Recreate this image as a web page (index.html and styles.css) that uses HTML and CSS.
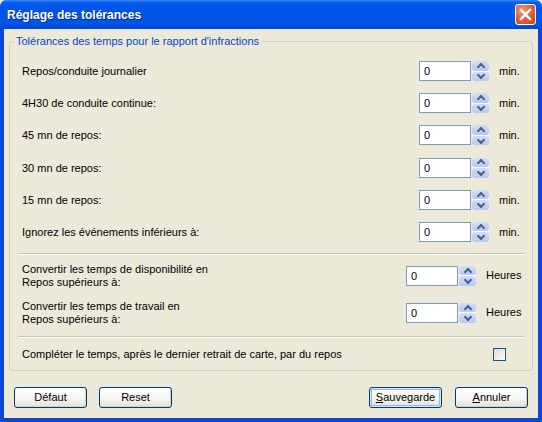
FILE: index.html
```html
<!DOCTYPE html>
<html lang="fr">
<head>
	<meta charset="UTF-8">
	<title>Réglage des tolérances</title>
	<link rel="stylesheet" href="styles.css">
</head>
<body>
	<div class="window">
		<div class="titlebar">
			<span class="title">Réglage des tolérances</span>
			<div class="close">
				<svg width="13" height="13" viewBox="0 0 13 13"><path d="M2 2 L11 11 M11 2 L2 11" stroke="#fff" stroke-width="2.4" stroke-linecap="square"/></svg>
			</div>
		</div>
		<div class="client">
			<fieldset class="group">
				<legend>Tolérances des temps pour le rapport d'infractions</legend>
				<div class="rows">
					<div class="row">
						<span class="label">Repos/conduite journalier</span>
						<div class="edit">0</div>
						<div class="spin"><div class="up"></div><div class="down"></div></div>
						<span class="unit">min.</span>
					</div>
					<div class="row">
						<span class="label">4H30 de conduite continue:</span>
						<div class="edit">0</div>
						<div class="spin"><div class="up"></div><div class="down"></div></div>
						<span class="unit">min.</span>
					</div>
					<div class="row">
						<span class="label">45 mn de repos:</span>
						<div class="edit">0</div>
						<div class="spin"><div class="up"></div><div class="down"></div></div>
						<span class="unit">min.</span>
					</div>
					<div class="row">
						<span class="label">30 mn de repos:</span>
						<div class="edit">0</div>
						<div class="spin"><div class="up"></div><div class="down"></div></div>
						<span class="unit">min.</span>
					</div>
					<div class="row">
						<span class="label">15 mn de repos:</span>
						<div class="edit">0</div>
						<div class="spin"><div class="up"></div><div class="down"></div></div>
						<span class="unit">min.</span>
					</div>
					<div class="row">
						<span class="label">Ignorez les événements inférieurs à:</span>
						<div class="edit">0</div>
						<div class="spin"><div class="up"></div><div class="down"></div></div>
						<span class="unit">min.</span>
					</div>
				</div>
				<div class="sep"></div>
				<div class="rows rows-h">
					<div class="row row-h">
						<span class="label">Convertir les temps de disponibilité en<br>Repos supérieurs à:</span>
						<div class="edit">0</div>
						<div class="spin"><div class="up"></div><div class="down"></div></div>
						<span class="unit">Heures</span>
					</div>
					<div class="row row-h">
						<span class="label">Convertir les temps de travail en<br>Repos supérieurs à:</span>
						<div class="edit">0</div>
						<div class="spin"><div class="up"></div><div class="down"></div></div>
						<span class="unit">Heures</span>
					</div>
				</div>
				<div class="sep sep2"></div>
				<div class="check-row">
					<span class="label">Compléter le temps, après le dernier retrait de carte, par du repos</span>
					<div class="checkbox"></div>
				</div>
			</fieldset>
			<div class="buttons">
				<div class="btn">Défaut</div>
				<div class="btn btn-reset">Reset</div>
				<div class="spacer"></div>
				<div class="btn btn-default"><u>S</u>auvegarde</div>
				<div class="btn btn-cancel"><u>A</u>nnuler</div>
			</div>
		</div>
	</div>
</body>
</html>
```

FILE: styles.css
```css
* {
	margin: 0;
	padding: 0;
	box-sizing: border-box;
}
body {
	font-family: "Liberation Sans", Arial, sans-serif;
	font-size: 11px;
	color: #000;
	background: #ECE9D8;
}
.window {
	width: 542px;
	height: 422px;
	display: flex;
	flex-direction: column;
	background: #0A47D8;
	border-radius: 7px 7px 0 0;
	overflow: hidden;
}
.titlebar {
	height: 29px;
	display: flex;
	align-items: center;
	padding: 0 6px 0 7px;
	background: linear-gradient(#3D8EF8 0, #0B61EF 2px, #0058EC 6px, #0054E6 14px, #0055E8 22px, #004FDB 26px, #0047CC 29px);
}
.title {
	flex: 1;
	font-size: 12px;
	font-weight: bold;
	color: #fff;
	text-shadow: 1px 1px 0 #0B2A8C;
	padding-top: 1px;
}
.close {
	width: 21px;
	height: 21px;
	border: 1px solid #fff;
	border-radius: 3px;
	background: radial-gradient(circle at 35% 30%, #EE9C82 0, #E2643F 45%, #C8401D 100%);
	display: flex;
	align-items: center;
	justify-content: center;
}
.client {
	flex: 1;
	margin: 0 4px 4px 4px;
	background: #ECE9D8;
	display: flex;
	flex-direction: column;
	padding: 0 5px;
}
.group {
	margin-top: 5px;
	border: 1px solid #D0D0BF;
	border-radius: 4px;
	padding: 13px 8px 9px 8px;
}
.group legend {
	color: #0046D5;
	height: 14px;
	line-height: 14px;
	padding: 0 3px 0 2px;
	margin-left: -4px;
}
.rows {
	display: flex;
	flex-direction: column;
	gap: 12.2px;
}
.row {
	height: 20px;
	display: grid;
	grid-template-columns: 1fr 52px 17px 34px;
	column-gap: 1px;
	align-items: center;
}
.row .label {
	padding-left: 4px;
}
.row-h {
	height: 26px;
	grid-template-columns: 1fr 52px 17px 47px;
	line-height: 13px;
}
.rows-h {
	margin-top: 8px;
	gap: 11px;
}
.edit {
	height: 20px;
	border: 1px solid #7F9DB9;
	background: #fff;
	padding-left: 4px;
	line-height: 18px;
}
.spin {
	height: 20px;
	display: flex;
	flex-direction: column;
	gap: 1px;
	background: #fff;
}
.spin .up, .spin .down {
	flex: 1;
	border-radius: 2px;
	background: linear-gradient(#D3DEF9, #B7C9F3);
	display: flex;
	align-items: center;
	justify-content: center;
}
.spin .up::after, .spin .down::after {
	content: "";
	width: 4px;
	height: 4px;
	border-left: 2px solid #4D6185;
	border-top: 2px solid #4D6185;
}
.spin .up::after {
	transform: translateY(1px) rotate(45deg);
}
.spin .down::after {
	transform: translateY(-1px) rotate(225deg);
}
.unit {
	padding-left: 9px;
}
.sep {
	height: 2px;
	margin-top: 11px;
	border-top: 1px solid #C5C2B2;
	border-bottom: 1px solid #fff;
}
.sep2 {
	margin-top: 10px;
}
.check-row {
	margin-top: 10px;
	height: 13px;
	display: flex;
	align-items: center;
	padding: 0 18px 0 4px;
}
.check-row .label {
	flex: 1;
}
.checkbox {
	width: 13px;
	height: 13px;
	border: 1px solid #1C5180;
	background: linear-gradient(135deg, #DCDCD5, #F6F6F3 80%, #fff);
}
.buttons {
	display: flex;
	margin-top: 16px;
	padding: 0 5px;
}
.spacer {
	flex: 1;
}
.btn {
	width: 73px;
	height: 21px;
	border: 1px solid #003C74;
	border-radius: 3px;
	background: linear-gradient(#FFFFFF, #F4F3EE 60%, #E3E0D6 100%);
	display: flex;
	align-items: center;
	justify-content: center;
	box-shadow: inset -1px -1px 0 #D6D0C5;
}
.btn-reset {
	margin-left: 12px;
}
.btn-default {
	box-shadow: inset 0 0 0 1px #CEE7FF, inset 0 0 0 2px #98B8EA;
}
.btn-cancel {
	margin-left: 13px;
}
```
